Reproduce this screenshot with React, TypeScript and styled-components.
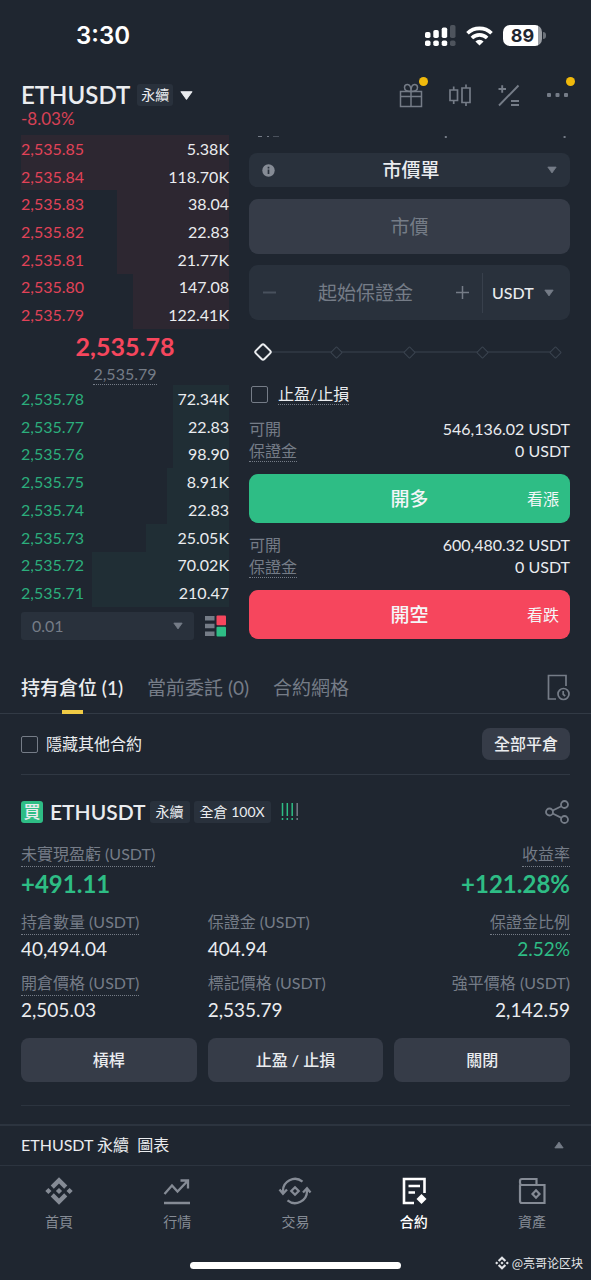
import React from "react";
import styled, { createGlobalStyle } from "styled-components";

const c = {
  page: "#1f2630",
  field: "#29313c",
  raised: "#363c48",
  line: "#2c343f",
  text: "#eaecef",
  muted: "#757c87",
  faint: "#48515d",
  red: "#f6465d",
  green: "#2ebd85",
  yellow: "#f0b90b",
};

const Global = createGlobalStyle`
  *, *::before, *::after { box-sizing: border-box; }
  body {
    margin: 0;
    background: ${c.page};
    color: ${c.text};
    font-family: Lato, "Noto Sans CJK TC", sans-serif;
    font-size: 16px;
  }
  button, input, select {
    font: inherit;
    color: inherit;
    background: none;
    border: 0;
    padding: 0;
    margin: 0;
    border-radius: 0;
    min-width: 0;
    outline: none;
  }
  button, select { cursor: pointer; }
  h1, h2, p, dl, dd { margin: 0; font-weight: inherit; }
  a { color: inherit; text-decoration: none; }
  svg { display: block; flex: none; }
`;

const Screen = styled.div`
  position: relative;
  display: flex;
  flex-direction: column;
  min-height: 100vh;
`;

/* Status bar */
const StatusBar = styled.div`
  display: flex;
  align-items: center;
  justify-content: space-between;
  height: 71px;
  padding: 0 45px 0 76px;
  color: #fff;
  font-family: Inter, sans-serif;
`;
const Clock = styled.span`
  font-size: 24px;
  font-weight: 600;
`;
const StatusIcons = styled.div`
  display: flex;
  align-items: center;
  gap: 10px;
`;
const Battery = styled.div`
  display: flex;
  align-items: center;
  gap: 1px;
`;
const BatteryBody = styled.span`
  width: 39px;
  height: 21px;
  border-radius: 7px;
  background: linear-gradient(90deg, #fff 89%, #9a9ea4 89%);
  color: ${c.page};
  font-size: 18px;
  font-weight: 700;
  line-height: 21px;
  text-align: center;
`;
const BatteryTip = styled.span`
  width: 3px;
  height: 7px;
  border-radius: 0 3px 3px 0;
  background: #6c727a;
`;

/* Header */
const Header = styled.header`
  display: flex;
  justify-content: space-between;
  padding: 10px 21px 6px;
`;
const PairRow = styled.div`
  display: flex;
  align-items: center;
  gap: 7px;
  height: 28px;
`;
const Pair = styled.h1`
  font-size: 24px;
  font-weight: 600;
  line-height: 28px;
`;
const Change = styled.p`
  color: ${c.red};
  font-size: 17px;
  line-height: 20px;
  opacity: 0.85;
`;
const Tag = styled.span<{ $wide?: boolean }>`
  padding: 0 ${(p) => (p.$wide ? 6 : 4)}px;
  border-radius: 3px;
  background: ${c.field};
  font-size: 14px;
  line-height: 22px;
  white-space: nowrap;
`;
const IconButton = styled.button<{ $dot?: boolean }>`
  position: relative;
  display: flex;
  align-items: center;
  justify-content: center;
  width: 24px;
  height: 28px;
  color: ${c.muted};
  &::after {
    content: "";
    display: ${(p) => (p.$dot ? "block" : "none")};
    position: absolute;
    top: -4px;
    right: -5px;
    width: 9px;
    height: 9px;
    border-radius: 50%;
    background: ${c.yellow};
  }
`;
const Tools = styled.div`
  display: flex;
  gap: 25px;
`;

/* Trade area */
const Trade = styled.main`
  display: grid;
  grid-template-columns: 208fr 321fr;
  gap: 20px;
  padding: 0 21px;
`;
const Book = styled.section`
  display: flex;
  flex-direction: column;
`;
const BookTable = styled.table<{ $side: "ask" | "bid" }>`
  width: 100%;
  height: ${(p) => (p.$side === "ask" ? 194 : 222)}px;
  border-collapse: collapse;
  --tint: ${(p) => (p.$side === "ask" ? "#2d2731" : "#202e35")};
  td {
    padding: 0;
    line-height: 24px;
  }
  td:first-child {
    color: ${(p) => (p.$side === "ask" ? c.red : c.green)};
    opacity: 0.9;
  }
  td:last-child {
    text-align: right;
  }
`;
const DepthRow = styled.tr`
  background: linear-gradient(270deg, var(--tint) var(--depth), transparent var(--depth));
`;
const LastPrice = styled.p`
  color: ${c.red};
  font-size: 25px;
  font-weight: 700;
  line-height: 34px;
  text-align: center;
`;
const MarkPrice = styled.p`
  align-self: center;
  border-bottom: 1px dotted ${c.muted};
  color: ${c.muted};
  line-height: 21px;
`;
const BookFooter = styled.div`
  display: flex;
  align-items: center;
  gap: 11px;
  margin-top: 5px;
  padding-right: 3px;
`;
const StepBox = styled.div`
  display: flex;
  align-items: center;
  flex: 1;
  height: 28px;
  padding: 0 11px;
  border-radius: 3px;
  background: ${c.field};
  color: ${c.muted};
`;
const Select = styled.select<{ $center?: boolean; $strong?: boolean }>`
  flex: 1;
  appearance: none;
  font-size: ${(p) => (p.$center ? 19 : 16)}px;
  font-weight: ${(p) => (p.$center || p.$strong ? 500 : 400)};
  line-height: 20px;
  text-align: ${(p) => (p.$center ? "center" : "left")};
  text-align-last: ${(p) => (p.$center ? "center" : "left")};
`;

const Form = styled.form`
  display: flex;
  flex-direction: column;
`;
const ClippedRow = styled.div`
  display: flex;
  height: 18px;
`;
const OrderType = styled.div`
  display: flex;
  align-items: center;
  height: 34px;
  padding: 0 13px;
  border-radius: 8px;
  background: ${c.field};
  color: ${c.text};
  select { line-height: 28px; }
`;
const PriceInput = styled.input`
  height: 55px;
  margin-top: 12px;
  border-radius: 9px;
  background: ${c.raised};
  font-size: 19px;
  text-align: center;
  &::placeholder { color: ${c.muted}; opacity: 1; }
`;
const AmountBox = styled.div`
  display: flex;
  align-items: center;
  height: 55px;
  margin-top: 11px;
  border-radius: 9px;
  background: ${c.field};
`;
const StepButton = styled.button<{ $dim?: boolean }>`
  width: 40px;
  height: 40px;
  display: grid;
  place-items: center;
  color: ${(p) => (p.$dim ? c.faint : c.muted)};
`;
const AmountInput = styled.input`
  flex: 1;
  width: 0;
  font-size: 19px;
  text-align: center;
  &::placeholder { color: ${c.muted}; opacity: 1; }
`;
const UnitBox = styled.div`
  display: flex;
  align-items: center;
  width: 88px;
  height: 40px;
  padding: 0 16px 0 9px;
  border-left: 1px solid #38404c;
`;

const SliderBox = styled.div`
  display: grid;
  align-items: center;
  height: 64px;
  padding: 0 7px;
  > * { grid-area: 1 / 1; }
`;
const Marks = styled.div`
  display: flex;
  align-items: center;
  justify-content: space-between;
  padding: 0 3px;
  background: linear-gradient(${c.line}, ${c.line}) center / calc(100% - 14px) 2px no-repeat;
`;
const Mark = styled.i`
  width: 9px;
  height: 9px;
  border: 1px solid #3a434f;
  border-radius: 1px;
  background: ${c.page};
  transform: rotate(45deg);
`;
const Range = styled.input`
  appearance: none;
  width: 100%;
  height: 24px;
  &::-webkit-slider-thumb {
    appearance: none;
    width: 14px;
    height: 14px;
    border: 2px solid ${c.text};
    border-radius: 3px;
    background: ${c.page};
    transform: rotate(45deg);
  }
`;

const CheckLabel = styled.label<{ $gap: number }>`
  display: flex;
  align-items: center;
  gap: ${(p) => p.$gap}px;
  line-height: 20px;
`;
const Checkbox = styled.input`
  appearance: none;
  width: 17px;
  height: 17px;
  border: 1px solid ${c.muted};
  border-radius: 2px;
  &:checked { background: ${c.muted}; }
`;
const StopRow = styled.div`
  height: 23px;
  padding-left: 2px;
`;
const Dotted = styled.span<{ $on?: boolean }>`
  border-bottom: 1px dotted ${(p) => (p.$on === false ? "transparent" : c.muted)};
`;
const Quote = styled.dl`
  margin-top: 11px;
  line-height: 22px;
`;
const QuoteLine = styled.div`
  display: flex;
  justify-content: space-between;
  height: 22px;
  dt { color: ${c.muted}; }
`;
const OrderButton = styled.button<{ $side: "long" | "short" }>`
  display: grid;
  grid-template-columns: 1fr auto 1fr;
  align-items: center;
  height: 49px;
  margin-top: 12px;
  padding: 0 11px;
  border-radius: 9px;
  background: ${(p) => (p.$side === "long" ? c.green : c.red)};
  color: #f4f6f8;
  line-height: 22px;
  strong {
    grid-column: 2;
    font-size: 19px;
    font-weight: 500;
  }
  small {
    font-size: 16px;
    text-align: right;
  }
`;

/* Positions */
const Tabs = styled.nav`
  display: flex;
  align-items: stretch;
  gap: 24px;
  height: 74px;
  padding: 22px 21px 0;
  border-bottom: 1px solid #323a45;
`;
const Tab = styled.button<{ $active?: boolean }>`
  position: relative;
  color: ${(p) => (p.$active ? c.text : c.muted)};
  font-size: 19px;
  font-weight: ${(p) => (p.$active ? 500 : 400)};
  line-height: 24px;
  white-space: nowrap;
  &::after {
    content: "";
    display: ${(p) => (p.$active ? "block" : "none")};
    position: absolute;
    bottom: -1px;
    left: 50%;
    width: 21px;
    height: 4px;
    margin-left: -10px;
    background: #f0cb45;
  }
`;
const HistoryButton = styled.button`
  display: grid;
  place-items: center;
  margin-left: auto;
  color: ${c.muted};
`;
const Positions = styled.section`
  padding: 0 21px;
`;
const FilterRow = styled.div`
  display: flex;
  align-items: center;
  justify-content: space-between;
  height: 61px;
  border-bottom: 1px solid #303843;
`;
const CloseAll = styled.button`
  height: 32px;
  padding: 0 12px;
  border-radius: 8px;
  background: ${c.raised};
  font-weight: 500;
  line-height: 20px;
`;
const Card = styled.article`
  padding: 25px 0 23px;
  border-bottom: 1px solid ${c.line};
`;
const CardHead = styled.div`
  display: flex;
  align-items: center;
  height: 23px;
  gap: 4px;
`;
const BuyTag = styled.span`
  width: 22px;
  margin-right: 3px;
  border-radius: 3px;
  background: ${c.green};
  font-size: 17px;
  font-weight: 500;
  line-height: 22px;
  text-align: center;
`;
const CardPair = styled.h2`
  font-size: 21px;
  font-weight: 600;
  line-height: 23px;
`;
const RiskMark = styled.span`
  display: flex;
  margin-left: 6px;
`;
const ShareButton = styled.button`
  margin-left: auto;
  color: ${c.muted};
`;
const Metrics = styled.dl`
  display: grid;
  grid-template-columns: 1fr 1fr 1fr;
  column-gap: 11px;
  row-gap: 9px;
  margin-top: 19px;
`;
const Metric = styled.div<{ $right?: boolean; $span?: boolean }>`
  display: flex;
  flex-direction: column;
  align-items: ${(p) => (p.$right ? "flex-end" : "flex-start")};
  grid-column: ${(p) => (p.$span ? "span 2" : "auto")};
  dt {
    color: ${c.muted};
    line-height: 24px;
    white-space: nowrap;
  }
`;
const Value = styled.dd<{ $big?: boolean; $up?: boolean }>`
  color: ${(p) => (p.$up ? c.green : c.text)};
  font-size: ${(p) => (p.$big ? 24 : 19)}px;
  font-weight: ${(p) => (p.$big ? 700 : 400)};
  line-height: ${(p) => (p.$big ? 34 : 27)}px;
`;
const Actions = styled.div`
  display: grid;
  grid-template-columns: 1fr 1fr 1fr;
  gap: 11px;
  margin-top: 15px;
`;
const Action = styled.button`
  height: 44px;
  border-radius: 8px;
  background: ${c.raised};
  font-weight: 500;
  line-height: 20px;
`;

/* Bottom */
const Bottom = styled.footer`
  margin-top: auto;
  padding-bottom: 11px;
`;
const ChartBar = styled.button`
  display: flex;
  align-items: center;
  justify-content: space-between;
  width: 100%;
  height: 42px;
  padding: 0 27px 1px 21px;
  border-top: 2px solid ${c.line};
  border-bottom: 1px solid ${c.line};
  line-height: 20px;
  white-space: pre;
`;
const NavBar = styled.nav`
  display: grid;
  grid-template-columns: repeat(5, 1fr);
  padding: 11px 0 0;
`;
const NavItem = styled.a<{ $active?: boolean }>`
  display: flex;
  flex-direction: column;
  align-items: center;
  gap: 7px;
  color: ${(p) => (p.$active ? "#ffffff" : "#858b95")};
  font-size: 14px;
  font-weight: ${(p) => (p.$active ? 500 : 400)};
  line-height: 20px;
`;
const HomeBar = styled.div`
  width: 211px;
  height: 7px;
  margin: 30px auto 0;
  border-radius: 4px;
  background: #fff;
`;
const Watermark = styled.span`
  position: absolute;
  right: 8px;
  bottom: 8px;
  display: flex;
  align-items: center;
  gap: 3px;
  color: #e4e6e9;
  font-family: "Noto Sans CJK SC", sans-serif;
  font-size: 12px;
  line-height: 18px;
`;

const Caret = ({ size = 10, color = c.muted, up = false }: { size?: number; color?: string; up?: boolean }) => (
  <svg width={size} height={size} viewBox="0 0 12 12" fill={color} stroke={color} strokeWidth="1" strokeLinejoin="round">
    <path d={up ? "M1 9.500 6 2.500 11 9.500Z" : "M1 2.500H11L6 9.500Z"} />
  </svg>
);

const SignalIcon = () => (
  <svg width="31" height="22" viewBox="0 0 31 22" fill="#fff">
    <rect x="0" y="7" width="5.500" height="6" rx="1.800" />
    <rect x="8.300" y="5" width="5.500" height="8" rx="1.800" />
    <rect x="16.700" y="2.500" width="5.500" height="10.500" rx="1.800" />
    <rect x="25" y="0" width="5.500" height="13" rx="1.800" fill="#4e545d" />
    <rect x="0" y="15.500" width="5.500" height="5.500" rx="1.800" />
    <rect x="8.300" y="15.500" width="5.500" height="5.500" rx="1.800" />
    <rect x="16.700" y="15.500" width="5.500" height="5.500" rx="1.800" />
    <rect x="25" y="15.500" width="5.500" height="5.500" rx="1.800" fill="#4e545d" />
  </svg>
);

const WifiIcon = () => (
  <svg width="27" height="20" viewBox="0 0 27 20" fill="none" stroke="#fff" strokeWidth="3.600">
    <path d="M1.500 7.300a17 17 0 0 1 24 0" />
    <path d="M5.900 12a10.700 10.700 0 0 1 15.200 0" />
    <path d="M13.500 19.600 9.400 15.400a5.800 5.800 0 0 1 8.200 0Z" fill="#fff" stroke="none" />
  </svg>
);

const GiftIcon = () => (
  <svg width="24" height="26" viewBox="0 0 24 26" fill="none" stroke="currentColor" strokeWidth="1.500">
    <path d="M1.500 9.500h21v5h-21zM1.500 14.500h21v10h-21zM12 9.500v15" />
    <path d="M12 9.500C7 9.500 5.500 7.500 5.500 5.500a3 3 0 0 1 3-3c2.300 0 3.500 2.500 3.500 7 0-4.500 1.200-7 3.500-7a3 3 0 0 1 3 3c0 2-1.500 4-6.500 4Z" />
  </svg>
);

const CandlesIcon = () => (
  <svg width="24" height="24" viewBox="0 0 24 24" fill="none" stroke="currentColor" strokeWidth="1.700">
    <path d="M2 7h7.500v10.500H2zM5.700 3.500V7M5.700 17.500V21M14 5h8v14.500h-8zM18 1.500V5M18 19.500V23" />
  </svg>
);

const CalcIcon = () => (
  <svg width="24" height="24" viewBox="0 0 24 24" fill="none" stroke="currentColor" strokeWidth="1.900">
    <path d="M2 22.500 21.500 2.500M1.500 6h7.500M5.200 2.300v7.400M14 18h8M14 22h8" />
  </svg>
);

const MoreIcon = () => (
  <svg width="24" height="6" viewBox="0 0 24 6" fill="currentColor">
    <rect x="1" y="1" width="4" height="4" rx="1" />
    <rect x="9.500" y="1" width="4" height="4" rx="1" />
    <rect x="18" y="1" width="4" height="4" rx="1" />
  </svg>
);

const InfoIcon = () => (
  <svg width="13" height="13" viewBox="0 0 13 13">
    <circle cx="6.500" cy="6.500" r="6.200" fill="#858b95" />
    <path d="M6.500 5.500v4.500M6.500 2.800v1.600" stroke={c.field} strokeWidth="1.700" />
  </svg>
);

const DepthIcon = () => (
  <svg width="21" height="22" viewBox="0 0 21 22">
    <path d="M0 1h9.500v4.500H0zM0 8.800h9.500v4.500H0zM0 16.600h9.500v4.500H0z" fill={c.muted} />
    <rect x="11.500" y="0.500" width="9.500" height="9.700" rx="1" fill={c.red} />
    <rect x="11.500" y="11.800" width="9.500" height="9.700" rx="1" fill={c.green} />
  </svg>
);

const HistoryIcon = () => (
  <svg width="23" height="27" viewBox="0 0 23 27" fill="none" stroke="currentColor" strokeWidth="1.700">
    <path d="M9 25H1.500V1.500H19V12" />
    <circle cx="16.500" cy="20" r="5.500" />
    <path d="M16.200 17v3.400l2 1.600" />
  </svg>
);

const ShareIcon = () => (
  <svg width="25" height="24" viewBox="0 0 25 24" fill="none" stroke="currentColor" strokeWidth="1.800">
    <circle cx="4.500" cy="12" r="3.500" />
    <circle cx="19.500" cy="4.500" r="3.500" />
    <circle cx="19.500" cy="19.500" r="3.500" />
    <path d="M7.700 10.500 16.400 6.200M7.700 13.500l8.700 4.400" />
  </svg>
);

const RiskIcon = () => (
  <svg width="18" height="18" viewBox="0 0 18 18" strokeWidth="1.500" strokeDasharray="13 2 2 9">
    <path d="M1.500 0v18M6.300 0v18M11.200 0v18" stroke={c.green} />
    <path d="M16.200 0v18" stroke={c.muted} />
  </svg>
);

const DiamondLogo = ({ size = 28 }: { size?: number }) => (
  <svg width={size} height={size} viewBox="0 0 28 28" fill="currentColor">
    <path d="M14 0.300 22.300 8.600 19.200 11.700 14 6.500 8.800 11.700 5.700 8.600Z" />
    <path d="M14 27.700 22.300 19.400 19.200 16.300 14 21.500 8.800 16.300 5.700 19.400Z" />
    <path d="M14 10.900 17.100 14 14 17.100 10.900 14ZM3.400 10.900 6.500 14 3.400 17.100 0.300 14ZM24.600 10.900 27.700 14 24.600 17.100 21.500 14Z" />
  </svg>
);

const MarketIcon = () => (
  <svg width="28" height="28" viewBox="0 0 28 28" fill="none" stroke="currentColor" strokeWidth="2.300">
    <path d="M1.500 17 9 8.500l5.500 6L24.500 4M17.500 3.500h7.500v8M1 26h26" />
  </svg>
);

const TradeIcon = () => (
  <svg width="34" height="28" viewBox="0 0 34 28" fill="none" stroke="currentColor" strokeWidth="2.300">
    <path d="M24.500 4.600A12 12 0 0 0 5 14.500v2M1.500 12.500 5 16.800l4-4.300" />
    <path d="M9.500 23.400A12 12 0 0 0 29 13.500v-2M32.500 15.500 29 11.200l-4 4.300" />
    <path d="M17 10.300 20.700 14 17 17.700 13.300 14Z" />
  </svg>
);

const FuturesIcon = () => (
  <svg width="28" height="28" viewBox="0 0 28 28" fill="none" stroke="currentColor" strokeWidth="2.600">
    <path d="M14 26H4V2h20.500v14M8.500 9h11.500M8.500 15.500H15" />
    <path d="M21.500 17 26.500 22 21.500 27 16.500 22Z" fill="currentColor" stroke="none" />
  </svg>
);

const WalletIcon = () => (
  <svg width="28" height="28" viewBox="0 0 28 28" fill="none" stroke="currentColor" strokeWidth="2.200">
    <path d="M2 7.500V24a2 2 0 0 0 2 2h22.500V8H3.500A2 2 0 0 1 2 6V4a2 2 0 0 1 2-2h14.500V8" />
    <path d="M18 13.300 21.500 17 18 20.700 14.500 17Z" />
  </svg>
);

const asks = [
  ["2,535.85", "5.38K", 100],
  ["2,535.84", "118.70K", 100],
  ["2,535.83", "38.04", 54],
  ["2,535.82", "22.83", 54],
  ["2,535.81", "21.77K", 54],
  ["2,535.80", "147.08", 46],
  ["2,535.79", "122.41K", 46],
] as const;

const bids = [
  ["2,535.78", "72.34K", 27],
  ["2,535.77", "22.83", 27],
  ["2,535.76", "98.90", 27],
  ["2,535.75", "8.91K", 30],
  ["2,535.74", "22.83", 30],
  ["2,535.73", "25.05K", 40],
  ["2,535.72", "70.02K", 66],
  ["2,535.71", "210.47", 66],
] as const;

type Level = readonly [string, string, number];

const Levels = ({ rows, side }: { rows: readonly Level[]; side: "ask" | "bid" }) => (
  <BookTable $side={side}>
    <tbody>
      {rows.map(([price, amount, depth]) => (
        <DepthRow key={price} style={{ "--depth": `${depth}%` } as React.CSSProperties}>
          <td>{price}</td>
          <td>{amount}</td>
        </DepthRow>
      ))}
    </tbody>
  </BookTable>
);

const OrderSide = ({ side, available, title, hint }: { side: "long" | "short"; available: string; title: string; hint: string }) => (
  <>
    <Quote>
      <QuoteLine>
        <dt>可開</dt>
        <dd>{available} USDT</dd>
      </QuoteLine>
      <QuoteLine>
        <Dotted as="dt">保證金</Dotted>
        <dd>0 USDT</dd>
      </QuoteLine>
    </Quote>
    <OrderButton type="button" $side={side}>
      <strong>{title}</strong>
      <small>{hint}</small>
    </OrderButton>
  </>
);

const metrics = [
  { label: "未實現盈虧 (USDT)", value: "+491.11", dotted: true, big: true, up: true, span: true },
  { label: "收益率", value: "+121.28%", dotted: true, big: true, up: true, right: true },
  { label: "持倉數量 (USDT)", value: "40,494.04", dotted: true },
  { label: "保證金 (USDT)", value: "404.94" },
  { label: "保證金比例", value: "2.52%", dotted: true, up: true, right: true },
  { label: "開倉價格 (USDT)", value: "2,505.03", dotted: true },
  { label: "標記價格 (USDT)", value: "2,535.79" },
  { label: "強平價格 (USDT)", value: "2,142.59", right: true },
];

const navItems = [
  { label: "首頁", icon: <DiamondLogo /> },
  { label: "行情", icon: <MarketIcon /> },
  { label: "交易", icon: <TradeIcon /> },
  { label: "合約", icon: <FuturesIcon />, active: true },
  { label: "資產", icon: <WalletIcon /> },
];

export default function App() {
  return (
    <Screen>
      <Global />
      <StatusBar>
        <Clock>3:30</Clock>
        <StatusIcons>
          <SignalIcon />
          <WifiIcon />
          <Battery>
            <BatteryBody>89</BatteryBody>
            <BatteryTip />
          </Battery>
        </StatusIcons>
      </StatusBar>

      <Header>
        <div>
          <PairRow>
            <Pair>ETHUSDT</Pair>
            <Tag>永續</Tag>
            <Caret size={13} color={c.text} />
          </PairRow>
          <Change>-8.03%</Change>
        </div>
        <Tools>
          <IconButton $dot aria-label="禮物"><GiftIcon /></IconButton>
          <IconButton aria-label="K線"><CandlesIcon /></IconButton>
          <IconButton aria-label="計算機"><CalcIcon /></IconButton>
          <IconButton $dot aria-label="更多"><MoreIcon /></IconButton>
        </Tools>
      </Header>

      <Trade>
        <Book>
          <Levels rows={asks} side="ask" />
          <LastPrice>2,535.78</LastPrice>
          <MarkPrice>2,535.79</MarkPrice>
          <Levels rows={bids} side="bid" />
          <BookFooter>
            <StepBox>
              <Select defaultValue="0.01" aria-label="深度">
                <option>0.01</option>
              </Select>
              <Caret />
            </StepBox>
            <DepthIcon />
          </BookFooter>
        </Book>

        <Form>
          <ClippedRow>
            <svg width="100%" height="4" fill={c.muted}>
              <rect x="9" y="1" width="4" height="1" />
              <rect x="18" y="1" width="2" height="1" />
              <rect x="24" y="1" width="6" height="1" opacity="0.5" />
              <rect x="61%" y="1" width="2" height="2" />
              <rect x="98%" y="1" width="2" height="2" />
            </svg>
          </ClippedRow>
          <OrderType>
            <InfoIcon />
            <Select $center defaultValue="市價單" aria-label="委託類型">
              <option>市價單</option>
            </Select>
            <Caret />
          </OrderType>
          <PriceInput placeholder="市價" aria-label="市價" readOnly />
          <AmountBox>
            <StepButton type="button" $dim aria-label="減少">
              <svg width="13" height="13" stroke="currentColor" strokeWidth="2"><path d="M0 6.500h13" /></svg>
            </StepButton>
            <AmountInput placeholder="起始保證金" aria-label="起始保證金" />
            <StepButton type="button" aria-label="增加">
              <svg width="13" height="13" stroke="currentColor" strokeWidth="1.500"><path d="M0 6.500h13M6.500 0v13" /></svg>
            </StepButton>
            <UnitBox>
              <Select $strong defaultValue="USDT" aria-label="單位">
                <option>USDT</option>
              </Select>
              <Caret />
            </UnitBox>
          </AmountBox>
          <SliderBox>
            <Marks>
              {[0, 25, 50, 75, 100].map((m) => (
                <Mark key={m} />
              ))}
            </Marks>
            <Range type="range" min="0" max="100" defaultValue="0" aria-label="比例" />
          </SliderBox>
          <StopRow>
            <CheckLabel $gap={10}>
              <Checkbox type="checkbox" />
              <Dotted>止盈/止損</Dotted>
            </CheckLabel>
          </StopRow>
          <OrderSide side="long" available="546,136.02" title="開多" hint="看漲" />
          <OrderSide side="short" available="600,480.32" title="開空" hint="看跌" />
        </Form>
      </Trade>

      <Tabs>
        <Tab $active>持有倉位 (1)</Tab>
        <Tab>當前委託 (0)</Tab>
        <Tab>合約網格</Tab>
        <HistoryButton aria-label="歷史"><HistoryIcon /></HistoryButton>
      </Tabs>

      <Positions>
        <FilterRow>
          <CheckLabel $gap={8}>
            <Checkbox type="checkbox" />
            <span>隱藏其他合約</span>
          </CheckLabel>
          <CloseAll>全部平倉</CloseAll>
        </FilterRow>
        <Card>
          <CardHead>
            <BuyTag>買</BuyTag>
            <CardPair>ETHUSDT</CardPair>
            <Tag $wide>永續</Tag>
            <Tag $wide>全倉 100X</Tag>
            <RiskMark><RiskIcon /></RiskMark>
            <ShareButton aria-label="分享"><ShareIcon /></ShareButton>
          </CardHead>
          <Metrics>
            {metrics.map((m) => (
              <Metric key={m.label} $right={m.right} $span={m.span}>
                <Dotted as="dt" $on={!!m.dotted}>{m.label}</Dotted>
                <Value $big={m.big} $up={m.up}>{m.value}</Value>
              </Metric>
            ))}
          </Metrics>
          <Actions>
            <Action>槓桿</Action>
            <Action>止盈 / 止損</Action>
            <Action>關閉</Action>
          </Actions>
        </Card>
      </Positions>

      <Bottom>
        <ChartBar>
          <span>{"ETHUSDT 永續  圖表"}</span>
          <Caret up />
        </ChartBar>
        <NavBar>
          {navItems.map((n) => (
            <NavItem key={n.label} href="#" $active={n.active}>
              {n.icon}
              {n.label}
            </NavItem>
          ))}
        </NavBar>
        <HomeBar />
      </Bottom>
      <Watermark>
        <DiamondLogo size={14} />
        <span>@亮哥论区块</span>
      </Watermark>
    </Screen>
  );
}
